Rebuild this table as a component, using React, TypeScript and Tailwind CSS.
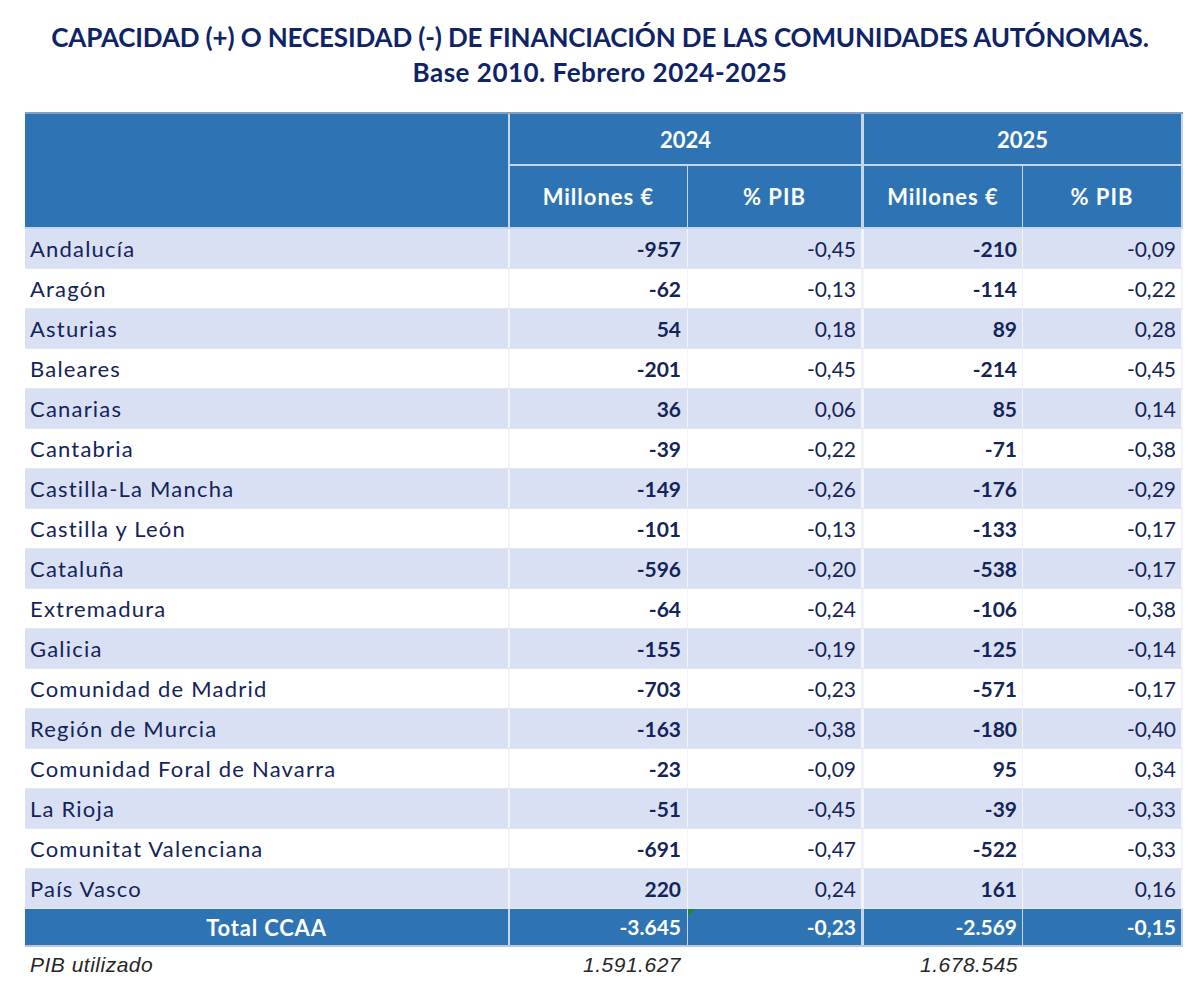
import React from "react";

type Row = { name: string; m24: string; p24: string; m25: string; p25: string };

const ROWS: Row[] = [
  { name: "Andalucía", m24: "-957", p24: "-0,45", m25: "-210", p25: "-0,09" },
  { name: "Aragón", m24: "-62", p24: "-0,13", m25: "-114", p25: "-0,22" },
  { name: "Asturias", m24: "54", p24: "0,18", m25: "89", p25: "0,28" },
  { name: "Baleares", m24: "-201", p24: "-0,45", m25: "-214", p25: "-0,45" },
  { name: "Canarias", m24: "36", p24: "0,06", m25: "85", p25: "0,14" },
  { name: "Cantabria", m24: "-39", p24: "-0,22", m25: "-71", p25: "-0,38" },
  { name: "Castilla-La Mancha", m24: "-149", p24: "-0,26", m25: "-176", p25: "-0,29" },
  { name: "Castilla y León", m24: "-101", p24: "-0,13", m25: "-133", p25: "-0,17" },
  { name: "Cataluña", m24: "-596", p24: "-0,20", m25: "-538", p25: "-0,17" },
  { name: "Extremadura", m24: "-64", p24: "-0,24", m25: "-106", p25: "-0,38" },
  { name: "Galicia", m24: "-155", p24: "-0,19", m25: "-125", p25: "-0,14" },
  { name: "Comunidad de Madrid", m24: "-703", p24: "-0,23", m25: "-571", p25: "-0,17" },
  { name: "Región de Murcia", m24: "-163", p24: "-0,38", m25: "-180", p25: "-0,40" },
  { name: "Comunidad Foral de Navarra", m24: "-23", p24: "-0,09", m25: "95", p25: "0,34" },
  { name: "La Rioja", m24: "-51", p24: "-0,45", m25: "-39", p25: "-0,33" },
  { name: "Comunitat Valenciana", m24: "-691", p24: "-0,47", m25: "-522", p25: "-0,33" },
  { name: "País Vasco", m24: "220", p24: "0,24", m25: "161", p25: "0,16" },
];

const GRID = "grid grid-cols-[485px_178px_176px_159px_160px]";

export default function App() {
  return (
    <div className="min-h-[991px] w-[1200px] bg-white font-['Lato',sans-serif]">
      {/* title */}
      <div className="pt-[20px] text-center text-[26px] font-bold leading-[35px] text-[#0f2468]">
        <div className="tracking-[-0.15px]">CAPACIDAD (+) O NECESIDAD (-) DE FINANCIACIÓN DE LAS COMUNIDADES AUTÓNOMAS.</div>
        <div className="tracking-[0.5px]">Base 2010. Febrero 2024-2025</div>
      </div>

      <div className="ml-[25px] mt-[22px] w-[1158px] border-t-2 border-[#86a0c2]">
        {/* header */}
        <div className={`${GRID} bg-[#2e74b5] text-[22px] font-bold text-white`}>
          <div className="row-span-2 border-r-2 border-b-2 border-[#c5d6ea]" />
          <div className="col-span-2 flex h-[52px] items-center justify-center border-r-[3px] border-b-2 border-[#c5d6ea]">
            2024
          </div>
          <div className="col-span-2 flex h-[52px] items-center justify-center border-r-2 border-b-2 border-[#c5d6ea]">
            2025
          </div>
          <div className="flex h-[63px] items-center justify-center border-r border-b-2 border-[#c5d6ea] tracking-[1px]">Millones €</div>
          <div className="flex h-[63px] items-center justify-center border-r-[3px] border-b-2 border-[#c5d6ea] tracking-[1px]">% PIB</div>
          <div className="flex h-[63px] items-center justify-center border-r border-b-2 border-[#c5d6ea] tracking-[1px]">Millones €</div>
          <div className="flex h-[63px] items-center justify-center border-r-2 border-b-2 border-[#c5d6ea] tracking-[1px]">% PIB</div>
        </div>

        {/* body */}
        {ROWS.map((r, i) => (
          <div
            key={r.name}
            className={`${GRID} h-[40px] border-b border-[#e3e6ee] text-[21px] text-[#14245a] ${
              i % 2 === 0 ? "bg-[#d9e0f3]" : "bg-white"
            }`}
          >
            <div className="flex items-center border-r-2 border-[#f2f4f9] pl-[5px] text-[22px] tracking-[1.2px]">{r.name}</div>
            <div className="flex items-center justify-end border-r border-[#f2f4f9] pr-[6px] font-bold">{r.m24}</div>
            <div className="flex items-center justify-end border-r-[3px] border-[#f2f4f9] pr-[5px]">{r.p24}</div>
            <div className="flex items-center justify-end border-r border-[#f2f4f9] pr-[5px] font-bold">{r.m25}</div>
            <div className="flex items-center justify-end border-r-2 border-[#f2f4f9] pr-[5px]">{r.p25}</div>
          </div>
        ))}

        {/* total */}
        <div className={`${GRID} h-[38px] border-b-2 border-[#b7c7dc] bg-[#2e74b5] text-[21px] font-bold text-white`}>
          <div className="flex items-center justify-center border-r-2 border-[#c5d6ea] text-[22px] tracking-[0.8px]">Total CCAA</div>
          <div className="flex items-center justify-end border-r border-[#c5d6ea] pr-[6px]">-3.645</div>
          <div className="relative flex items-center justify-end border-r-[3px] border-[#c5d6ea] pr-[5px]">
            <span className="absolute left-0 top-0 h-0 w-0 border-t-[7px] border-r-[7px] border-t-[#1a8a2a] border-r-transparent" />
            -0,23
          </div>
          <div className="flex items-center justify-end border-r border-[#c5d6ea] pr-[5px]">-2.569</div>
          <div className="flex items-center justify-end border-r-2 border-[#c5d6ea] pr-[5px]">-0,15</div>
        </div>

        {/* footer */}
        <div className={`${GRID} h-[36px] font-['Liberation_Sans',sans-serif] text-[21px] italic tracking-[0.5px] text-[#262626]`}>
          <div className="flex items-center pl-[5px]">PIB utilizado</div>
          <div className="flex items-center justify-end pr-[7px]">1.591.627</div>
          <div />
          <div className="flex items-center justify-end pr-[5px]">1.678.545</div>
          <div />
        </div>
      </div>
    </div>
  );
}
